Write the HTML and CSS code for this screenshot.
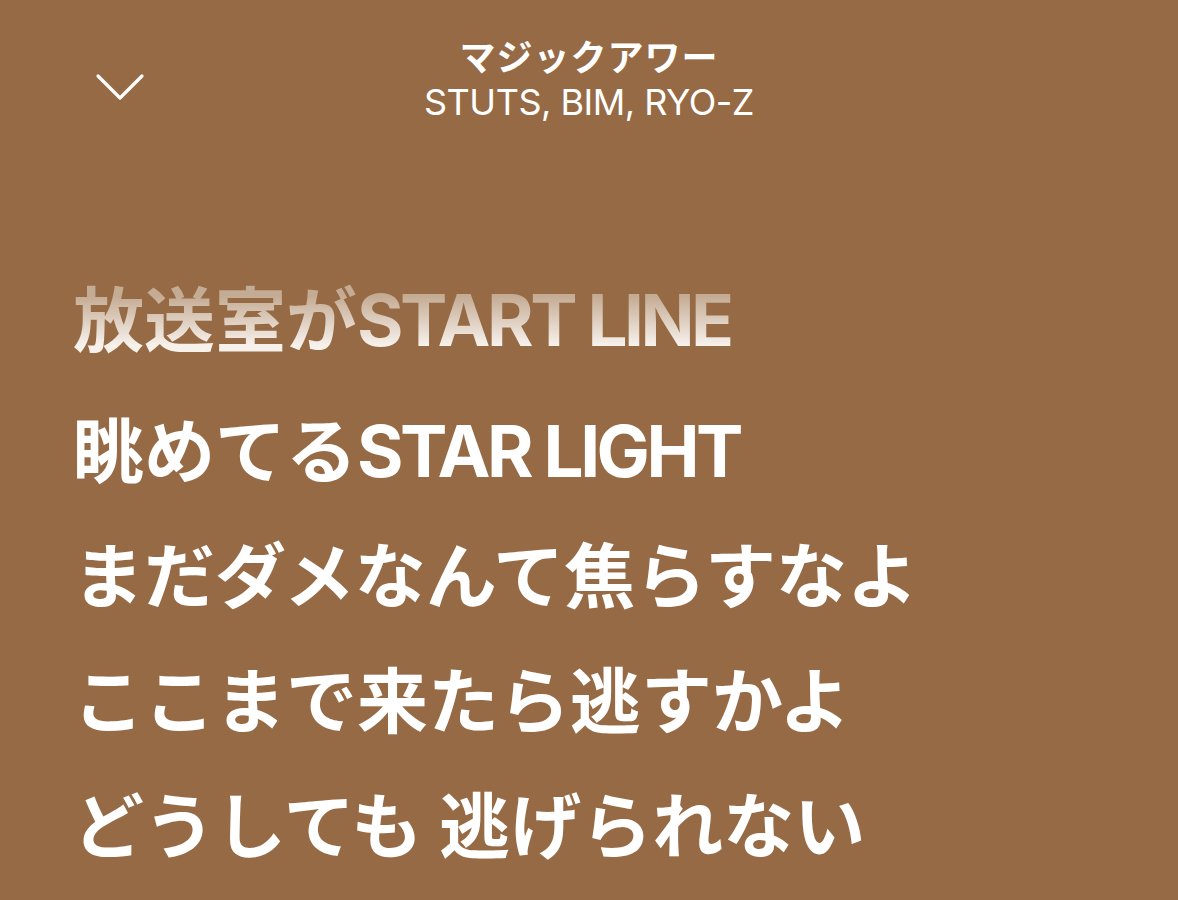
FILE: index.html
```html
<!DOCTYPE html>
<html lang="ja">
<head>
    <meta charset="UTF-8">
    <meta name="viewport" content="width=device-width, initial-scale=1.0">
    <link rel="stylesheet" href="styles.css">
    <title>マジックアワー</title>
</head>
<body>
    <div class="player">
        <div class="top">
            <button class="close">
                <svg width="50" height="30" viewBox="0 0 50 30">
                    <path d="M3 4 L25 26 L47 4" fill="none" stroke="#fff" stroke-width="3.2" stroke-linecap="round" stroke-linejoin="round"/>
                </svg>
            </button>
            <div class="track">
                <div class="title">マジックアワー</div>
                <div class="artist">STUTS, BIM, RYO-Z</div>
            </div>
        </div>

        <div class="lyrics">
            <p class="line current">放送室が<span class="en">START LINE</span></p>
            <p class="line">眺めてる<span class="en">STAR LIGHT</span></p>
            <p class="line">まだダメなんて焦らすなよ</p>
            <p class="line">ここまで来たら逃すかよ</p>
            <p class="line">どうしても 逃げられない</p>
        </div>
    </div>
</body>
</html>
```

FILE: styles.css
```css
html, body{
    margin: 0;
    padding: 0;
    height: 100%;
    background-color: #966a45;
}

.player{
    height: 900px;
    overflow: hidden;
    color: #fff;
    font-family: 'Inter', 'Noto Sans CJK JP', sans-serif;
}

.top{
    display: grid;
    grid-template-columns: 1fr auto 1fr;
    align-items: center;
    padding: 32px 0 0 0;
}

.close{
    justify-self: start;
    margin-left: 95px;
    margin-top: 16px;
    padding: 0;
    border: none;
    background: none;
    display: flex;
}

.track{
    text-align: center;
}

.title{
    font-family: 'Noto Sans CJK JP', sans-serif;
    font-size: 36px;
    font-weight: 700;
    line-height: 46px;
    letter-spacing: 1px;
}

.artist{
    font-size: 36px;
    font-weight: 400;
    letter-spacing: -0.5px;
    line-height: 48px;
}

.lyrics{
    padding: 126px 0 0 73px;
}

.line{
    margin: 0;
    font-size: 71px;
    font-weight: 700;
    line-height: 125px;
    white-space: nowrap;
}

.en{
    letter-spacing: -3.5px;
}

.current{
    line-height: 137px;
    color: transparent;
    background: linear-gradient(to bottom, #c4ab93 32%, #f7f1ec 68%);
    -webkit-background-clip: text;
    background-clip: text;
    display: inline-block;
}
```
